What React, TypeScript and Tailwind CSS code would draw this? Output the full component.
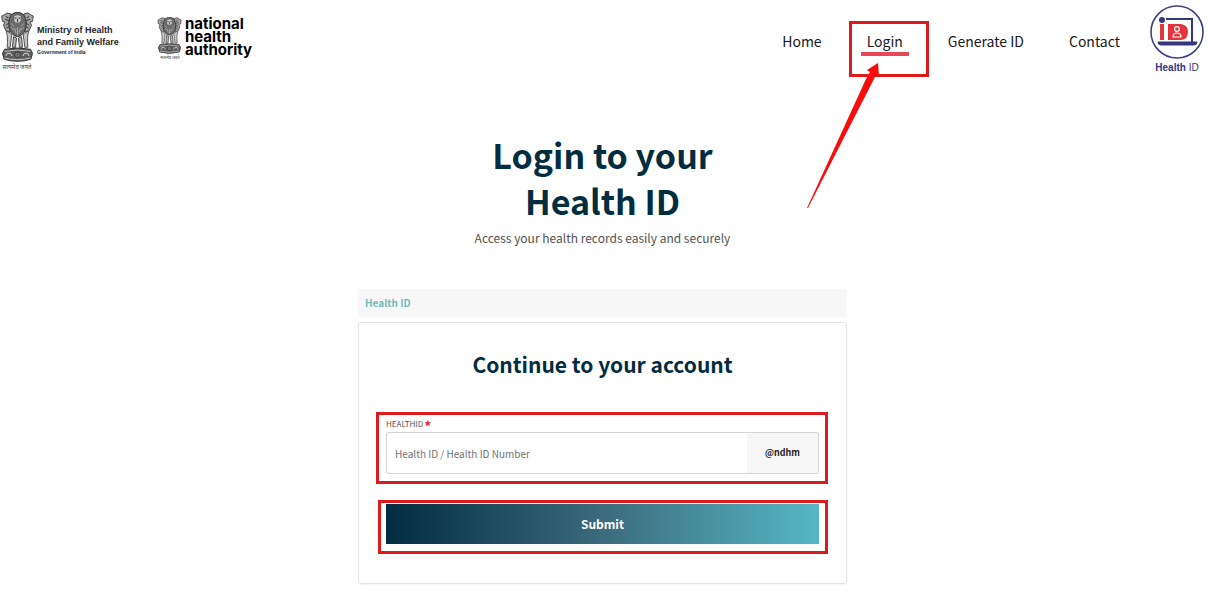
import { useState } from 'react'

const navLinks = [
  { label: 'Home', href: '#home' },
  { label: 'Login', href: '#login', active: true },
  { label: 'Generate ID', href: '#generate' },
  { label: 'Contact', href: '#contact' },
]

function Emblem({ className }: { className: string }) {
  return (
    <svg viewBox="0 0 98 150" className={className} aria-hidden="true">
      {/* Side lions */}
      <g fill="#a3a3a3" stroke="#444" strokeWidth="3">
        <path d="M3 22 L2 12 L10 8 L18 3 L30 6 L34 20 L30 38 L26 60 L14 56 L7 40 L11 30 L4 28 Z" />
        <path d="M95 22 L96 12 L88 8 L80 3 L68 6 L64 20 L68 38 L72 60 L84 56 L91 40 L87 30 L94 28 Z" />
      </g>
      <path d="M15 56 Q21 74 18 106 L27 106 L32 66 Z M83 56 Q77 74 80 106 L71 106 L66 66 Z" fill="#c4c4c4" stroke="#555" strokeWidth="3" />
      {/* Front lion */}
      <path d="M30 8 Q49 -6 68 8 Q80 30 72 54 Q64 72 49 74 Q34 72 26 54 Q18 30 30 8 Z" fill="#6b6b6b" stroke="#333" strokeWidth="3" />
      <path d="M37 12 Q49 4 61 12 L60 26 L54 38 L44 38 L38 26 Z" fill="#c9c9c9" stroke="#444" strokeWidth="2" />
      <path d="M40 18 h6 M52 18 h6 M49 20 v10 M43 32 q6 5 12 0" fill="none" stroke="#333" strokeWidth="3" />
      <path d="M30 34 l8 10 M68 34 l-8 10 M30 46 l10 8 M68 46 l-10 8 M40 48 l5 16 M58 48 l-5 16 M49 46 v22" stroke="#c8c8c8" strokeWidth="2" />
      <path d="M14 14 l8 3 M12 22 l12 4 M14 40 l10 -8 M16 48 l8 -4 M84 14 l-8 3 M86 22 l-12 4 M84 40 l-10 -8 M82 48 l-8 -4" stroke="#333" strokeWidth="3" />
      <path d="M37 74 L34 106 L43 106 L46 78 Z M61 74 L64 106 L55 106 L52 78 Z" fill="#b5b5b5" stroke="#444" strokeWidth="3" />
      {/* Abacus */}
      <path d="M10 112 Q49 104 88 112 L94 124 L89 142 Q49 154 9 142 L4 124 Z" fill="#5c5c5c" stroke="#333" strokeWidth="3" />
      <path d="M10 118 Q49 110 88 118 M10 138 Q49 148 88 138" fill="none" stroke="#c4c4c4" strokeWidth="3" />
      <circle cx="49" cy="128" r="8" fill="#ccc" stroke="#222" strokeWidth="3" />
      <path d="M42 128 h14 M49 121 v14 M44 123 l10 10 M54 123 l-10 10" stroke="#444" strokeWidth="2" />
      <path d="M14 132 l4 -8 h10 l5 8 M84 132 l-4 -8 h-10 l-5 8" fill="none" stroke="#ddd" strokeWidth="3" />
    </svg>
  )
}

function HealthIdLogo() {
  return (
    <a href="#home" className="flex w-14 flex-col items-center">
      <svg viewBox="0 0 56 56" className="size-14" aria-hidden="true">
        <circle cx="28" cy="28" r="26" fill="#fff" stroke="#3d3f86" strokeWidth="1.6" />
        <path d="M17 15 H43 V38" fill="none" stroke="#34367f" strokeWidth="2" />
        <circle cx="13" cy="16" r="3" fill="#34367f" />
        <rect x="11" y="20" width="4" height="16" fill="#e5343c" />
        <path d="M19 20 H32 Q39 21 39 28 Q39 35 32 36 H19 Z" fill="#e5343c" />
        <circle cx="28" cy="25" r="2.4" fill="none" stroke="#fff" strokeWidth="1.2" />
        <path d="M24 33 Q24 29 28 29 Q32 29 32 33 Z" fill="none" stroke="#fff" strokeWidth="1.2" />
        <path d="M9 38 H48 Q48 41 45 41 H12 Q9 41 9 38 Z" fill="#34367f" stroke="#34367f" />
      </svg>
      <span className="mt-[2px] font-['Liberation_Sans'] text-[10px] leading-3 whitespace-nowrap text-[#34367f]">
        <b>Health</b> ID
      </span>
    </a>
  )
}

function Header() {
  return (
    <header className="flex items-start justify-between pr-[3px]">
      <div className="flex items-start">
        <div className="flex gap-[3px] pt-3">
          <div className="flex w-[34px] flex-col items-center">
            <Emblem className="h-[50px] w-[33px]" />
            <span className="text-[6px] leading-[9px] whitespace-nowrap text-neutral-700">सत्यमेव जयते</span>
          </div>
          <p className="pt-3 font-['Liberation_Sans',sans-serif] text-[9px] leading-3 font-bold whitespace-nowrap text-neutral-800">
            Ministry of Health
            <br />
            and Family Welfare
            <br />
            <span className="block text-[5px] leading-2">Government of India</span>
          </p>
        </div>
        <div className="ml-[38px] flex gap-[2px] pt-[17px]">
          <div className="flex w-[26px] flex-col items-center">
            <Emblem className="h-[37px] w-[25px]" />
            <span className="text-[4px] leading-[6px] whitespace-nowrap text-neutral-700">सत्यमेव जयते</span>
          </div>
          <p className="font-[Inter] text-[15px] leading-[13px] font-bold text-black">
            national
            <br />
            health
            <br />
            authority
          </p>
        </div>
      </div>

      <div className="flex items-start">
        <nav className="flex gap-[45px] pt-[31px]">
          {navLinks.map((link) => (
            <a key={link.label} href={link.href} className="relative text-sm leading-5 text-neutral-900">
              {link.label}
              {link.active && (
                <>
                  <span className="absolute -inset-x-[6px] top-[21px] h-1 bg-[#e8485a]" />
                  <span className="absolute -top-[10px] -right-[26px] -left-[18px] h-14 border-3 border-[#dd1a1c]" />
                  <svg viewBox="0 0 72 146" className="absolute top-8 right-6 h-[146px] w-[72px]" aria-hidden="true">
                    <path d="M71 0 L60 7 L63 9 L59 16 L0 145 L1 145 L67 16 L69 12 L72 13 Z" fill="#f90d0b" />
                  </svg>
                </>
              )}
            </a>
          ))}
        </nav>
        <div className="ml-[29px] pt-1">
          <HealthIdLogo />
        </div>
      </div>
    </header>
  )
}

export default function App() {
  const [healthId, setHealthId] = useState('')

  return (
    <div className="min-h-screen bg-white font-['Noto_Sans_CJK_SC','Noto_Sans',sans-serif]">
      <Header />

      <main className="flex flex-col items-center pt-[58px] pr-[3px] pb-4">
        <h1 className="text-center text-[34px] leading-[46px] font-bold text-[#022c40]">
          Login to your
          <br />
          Health ID
        </h1>
        <p className="mt-1 text-xs leading-5 text-neutral-600">Access your health records easily and securely</p>

        <div className="mt-[41px] w-full max-w-[489px]">
          <div className="bg-[#f7f7f7] px-[7px] text-[10px] leading-7 font-bold text-[#72bcbc]">Health ID</div>

          <form
            className="mt-[5px] rounded-[3px] border border-neutral-200 px-[27px] pt-[25px] pb-[39px] shadow-xs"
            onSubmit={(e) => e.preventDefault()}
          >
            <h2 className="text-center text-[21px] leading-8 font-bold text-[#022c40]">Continue to your account</h2>

            {/* Health ID field */}
            <div className="relative mt-[38px]">
              <label htmlFor="healthId" className="mb-[2px] flex h-3 text-[8px] leading-3 text-neutral-600">
                HEALTHID
                <span className="ml-px text-sm leading-4 font-bold text-[#e02434]">*</span>
              </label>
              <div className="flex h-[42px] overflow-hidden rounded-[2px] border border-neutral-300">
                <input
                  id="healthId"
                  type="text"
                  value={healthId}
                  onChange={(e) => setHealthId(e.target.value)}
                  placeholder="Health ID / Health ID Number"
                  className="min-w-0 flex-1 px-2 text-[10px] outline-none placeholder:text-neutral-500"
                />
                <span className="flex w-[71px] items-center justify-center bg-[#f6f6f6] text-[9px] font-bold text-neutral-800">
                  @ndhm
                </span>
              </div>
              <span className="pointer-events-none absolute -top-[6px] -right-[9px] -bottom-[10px] -left-[10px] border-3 border-[#dd1a1c]" />
            </div>

            {/* Submit */}
            <div className="relative mt-[30px]">
              <button
                type="submit"
                className="block h-10 w-full bg-linear-to-r/srgb from-[#022c40] via-[#3b6b7c] to-[#56b7c6] text-xs font-bold text-white"
              >
                Submit
              </button>
              <span className="pointer-events-none absolute -top-1 -right-[9px] -bottom-[10px] -left-2 border-3 border-[#dd1a1c]" />
            </div>
          </form>
        </div>
      </main>
    </div>
  )
}
